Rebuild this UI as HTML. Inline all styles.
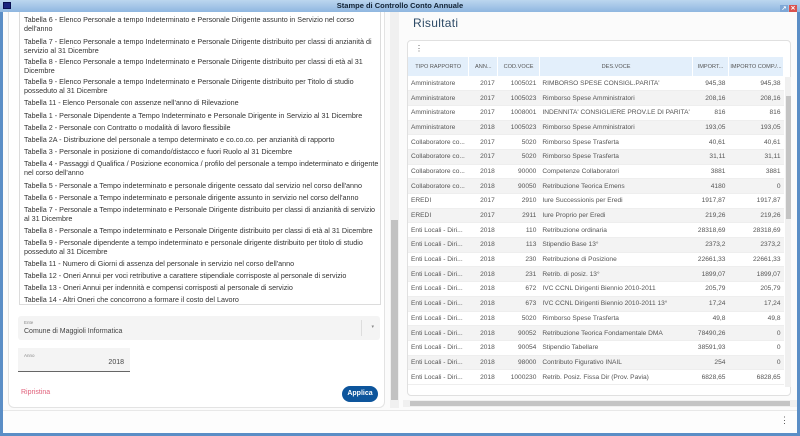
<!DOCTYPE html>
<html><head><meta charset="utf-8"><style>
*{box-sizing:border-box;margin:0;padding:0}
body{width:800px;height:436px;overflow:hidden;font-family:"Liberation Sans",sans-serif;background:#5b8ec6;position:relative}
.tb{position:absolute;left:0;top:0;width:800px;height:12px;background:linear-gradient(#bcd6ef,#8fb6e0);font-size:7.5px;font-weight:bold;color:#123;text-align:center;line-height:12px}
.ico{position:absolute;left:3px;top:2px;width:8px;height:7px;background:#1a237e;border:1px solid #0a0f50}
.btns{position:absolute;right:3px;top:2px}
.btns span{display:inline-block;width:8px;height:8px;margin-left:1px;font-size:6px;line-height:8px;color:#fff;text-align:center}
.main{position:absolute;left:3px;top:12px;width:794px;height:421px;background:#fbfbfb}
.lc{position:absolute;left:5px;top:0;width:377px;height:396px;background:#fff;border:1px solid #e3e3e3;border-top:none;border-radius:0 0 6px 6px}
.list{position:absolute;left:10px;top:0;width:362px;height:293px;border:1px solid #dcdcdc;border-top:none;background:#fff}
.it{position:absolute;left:4px;font-size:7.2px;color:#333;line-height:9px;width:356px}
.lsb{position:absolute;left:387px;top:0;width:9px;height:396px;background:#f0f0f0}
.lth{position:absolute;left:388px;top:208px;width:7px;height:180px;background:#c2c2c2}
.sel{position:absolute;left:15px;top:304px;width:362px;height:24px;background:#f4f4f4;border-radius:3px}
.anno{position:absolute;left:15px;top:336px;width:112px;height:24px;background:#f4f4f4;border-bottom:1px solid #666}
.card{position:absolute;left:404px;top:28px;width:384px;height:356px;background:#fff;border:1px solid #e0e0e0;border-radius:4px}
table{position:absolute;left:0;top:16px;border-collapse:collapse;width:376px;font-size:6.6px;color:#555}
th{background:#e3effb;font-weight:normal;font-size:5.6px;height:19px;text-align:center;color:#555;border-right:1px solid #fff}
td{height:14.7px;padding:0 3px;white-space:nowrap;border-bottom:1px solid #eee}
tr:nth-child(odd) td{background:#f3f3f3}
.r{text-align:right}
.bot{position:absolute;left:0;top:398px;width:794px;height:23px;background:#fdfdfd;border-top:1px solid #e8e8e8}
</style></head><body>
<div class="tb"><div class="ico"></div>Stampe di Controllo Conto Annuale<div class="btns"><span style="background:#7ea7d6">↗</span><span style="background:#d9534f">✕</span></div></div>
<div class="main">
<div class="lc">
<div class="list">
<div class="it" style="top:3px">Tabella 6 - Elenco Personale a tempo Indeterminato e Personale Dirigente assunto in Servizio nel corso dell'anno</div>
<div class="it" style="top:25px">Tabella 7 - Elenco Personale a tempo Indeterminato e Personale Dirigente distribuito per classi di anzianità di servizio al 31 Dicembre</div>
<div class="it" style="top:45px">Tabella 8 - Elenco Personale a tempo Indeterminato e Personale Dirigente distribuito per classi di età al 31 Dicembre</div>
<div class="it" style="top:65px">Tabella 9 - Elenco Personale a tempo Indeterminato e Personale Dirigente distribuito per Titolo di studio posseduto al 31 Dicembre</div>
<div class="it" style="top:86px">Tabella 11 - Elenco Personale con assenze nell'anno di Rilevazione</div>
<div class="it" style="top:99px">Tabella 1 - Personale Dipendente a Tempo Indeterminato e Personale Dirigente in Servizio al 31 Dicembre</div>
<div class="it" style="top:111px">Tabella 2 - Personale con Contratto o modalità di lavoro flessibile</div>
<div class="it" style="top:123px">Tabella 2A - Distribuzione del personale a tempo determinato e co.co.co. per anzianità di rapporto</div>
<div class="it" style="top:135px">Tabella 3 - Personale in posizione di comando/distacco e fuori Ruolo al 31 Dicembre</div>
<div class="it" style="top:147px">Tabella 4 - Passaggi d Qualifica / Posizione economica / profilo del personale a tempo indeterminato e dirigente nel corso dell'anno</div>
<div class="it" style="top:169px">Tabella 5 - Personale a Tempo indeterminato e personale dirigente cessato dal servizio nel corso dell'anno</div>
<div class="it" style="top:181px">Tabella 6 - Personale a Tempo indeterminato e personale dirigente assunto in servizio nel corso dell'anno</div>
<div class="it" style="top:193px">Tabella 7 - Personale a Tempo indeterminato e Personale Dirigente distribuito per classi di anzianità di servizio al 31 Dicembre</div>
<div class="it" style="top:214px">Tabella 8 - Personale a Tempo indeterminato e Personale Dirigente distribuito per classi di età al 31 Dicembre</div>
<div class="it" style="top:226px">Tabella 9 - Personale dipendente a tempo indeterminato e personale dirigente distribuito per titolo di studio posseduto al 31 Dicembre</div>
<div class="it" style="top:247px">Tabella 11 - Numero di Giorni di assenza del personale in servizio nel corso dell'anno</div>
<div class="it" style="top:259px">Tabella 12 - Oneri Annui per voci retributive a carattere stipendiale corrisposte al personale di servizio</div>
<div class="it" style="top:271px">Tabella 13 - Oneri Annui per indennità e compensi corrisposti al personale di servizio</div>
<div class="it" style="top:283px">Tabella 14 - Altri Oneri che concorrono a formare il costo del Lavoro</div>
</div>
</div>
<div class="sel"><div style="position:absolute;left:6px;top:4px;font-size:4.5px;color:#888">Ente</div><div style="position:absolute;left:6px;top:12px;font-size:7px;color:#444">Comune di Maggioli Informatica</div><div style="position:absolute;right:6px;top:8px;font-size:5px;color:#888">▾</div><div style="position:absolute;right:18px;top:4px;height:16px;border-left:1px solid #ddd"></div></div>
<div class="anno"><div style="position:absolute;left:6px;top:5px;font-size:4.5px;color:#888">Anno</div><div style="position:absolute;right:6px;top:11px;font-size:7px;color:#444">2018</div></div>
<div style="position:absolute;left:18px;top:377px;font-size:7px;color:#e0607a">Ripristina</div>
<div style="position:absolute;left:339px;top:374px;width:36px;height:16px;border-radius:9px;background:#0d559c;color:#fff;font-size:7px;font-weight:bold;text-align:center;line-height:16px">Applica</div>
<div class="lsb"></div><div class="lth"></div>
<div style="position:absolute;left:410px;top:4px;font-size:12px;color:#2d4a66;letter-spacing:.3px">Risultati</div>
<div class="card">
<div style="position:absolute;left:7px;top:3px;font-size:8px;color:#555">⋮</div>
<table>
<tr><th style="width:61px">TIPO RAPPORTO</th><th style="width:30px">ANN...</th><th style="width:43px">COD.VOCE</th><th style="width:148px">DES.VOCE</th><th style="width:36px">IMPORT...</th><th style="width:58px">IMPORTO COMP./...</th></tr>
<tr><td>Amministratore</td><td class="r">2017</td><td class="r">1005021</td><td>RIMBORSO SPESE CONSIGL.PARITA'</td><td class="r">945,38</td><td class="r">945,38</td></tr>
<tr><td>Amministratore</td><td class="r">2017</td><td class="r">1005023</td><td>Rimborso Spese Amministratori</td><td class="r">208,16</td><td class="r">208,16</td></tr>
<tr><td>Amministratore</td><td class="r">2017</td><td class="r">1008001</td><td>INDENNITA' CONSIGLIERE PROV.LE DI PARITA'</td><td class="r">816</td><td class="r">816</td></tr>
<tr><td>Amministratore</td><td class="r">2018</td><td class="r">1005023</td><td>Rimborso Spese Amministratori</td><td class="r">193,05</td><td class="r">193,05</td></tr>
<tr><td>Collaboratore co...</td><td class="r">2017</td><td class="r">5020</td><td>Rimborso Spese Trasferta</td><td class="r">40,61</td><td class="r">40,61</td></tr>
<tr><td>Collaboratore co...</td><td class="r">2017</td><td class="r">5020</td><td>Rimborso Spese Trasferta</td><td class="r">31,11</td><td class="r">31,11</td></tr>
<tr><td>Collaboratore co...</td><td class="r">2018</td><td class="r">90000</td><td>Competenze Collaboratori</td><td class="r">3881</td><td class="r">3881</td></tr>
<tr><td>Collaboratore co...</td><td class="r">2018</td><td class="r">90050</td><td>Retribuzione Teorica Emens</td><td class="r">4180</td><td class="r">0</td></tr>
<tr><td>EREDI</td><td class="r">2017</td><td class="r">2910</td><td>Iure Successionis per Eredi</td><td class="r">1917,87</td><td class="r">1917,87</td></tr>
<tr><td>EREDI</td><td class="r">2017</td><td class="r">2911</td><td>Iure Proprio per Eredi</td><td class="r">219,26</td><td class="r">219,26</td></tr>
<tr><td>Enti Locali - Diri...</td><td class="r">2018</td><td class="r">110</td><td>Retribuzione ordinaria</td><td class="r">28318,69</td><td class="r">28318,69</td></tr>
<tr><td>Enti Locali - Diri...</td><td class="r">2018</td><td class="r">113</td><td>Stipendio Base 13°</td><td class="r">2373,2</td><td class="r">2373,2</td></tr>
<tr><td>Enti Locali - Diri...</td><td class="r">2018</td><td class="r">230</td><td>Retribuzione di Posizione</td><td class="r">22661,33</td><td class="r">22661,33</td></tr>
<tr><td>Enti Locali - Diri...</td><td class="r">2018</td><td class="r">231</td><td>Retrib. di posiz. 13°</td><td class="r">1899,07</td><td class="r">1899,07</td></tr>
<tr><td>Enti Locali - Diri...</td><td class="r">2018</td><td class="r">672</td><td>IVC CCNL Dirigenti Biennio 2010-2011</td><td class="r">205,79</td><td class="r">205,79</td></tr>
<tr><td>Enti Locali - Diri...</td><td class="r">2018</td><td class="r">673</td><td>IVC CCNL Dirigenti Biennio 2010-2011 13°</td><td class="r">17,24</td><td class="r">17,24</td></tr>
<tr><td>Enti Locali - Diri...</td><td class="r">2018</td><td class="r">5020</td><td>Rimborso Spese Trasferta</td><td class="r">49,8</td><td class="r">49,8</td></tr>
<tr><td>Enti Locali - Diri...</td><td class="r">2018</td><td class="r">90052</td><td>Retribuzione Teorica Fondamentale DMA</td><td class="r">78490,26</td><td class="r">0</td></tr>
<tr><td>Enti Locali - Diri...</td><td class="r">2018</td><td class="r">90054</td><td>Stipendio Tabellare</td><td class="r">38591,93</td><td class="r">0</td></tr>
<tr><td>Enti Locali - Diri...</td><td class="r">2018</td><td class="r">98000</td><td>Contributo Figurativo INAIL</td><td class="r">254</td><td class="r">0</td></tr>
<tr><td>Enti Locali - Diri...</td><td class="r">2018</td><td class="r">1000230</td><td>Retrib. Posiz. Fissa Dir (Prov. Pavia)</td><td class="r">6828,65</td><td class="r">6828,65</td></tr>
</table>
<div style="position:absolute;left:377px;top:36px;width:6px;height:310px;background:#f0f0f0"></div>
<div style="position:absolute;left:378px;top:55px;width:5px;height:123px;background:#c4c4c4"></div>
</div>
<div style="position:absolute;left:400px;top:388px;width:394px;height:7px;background:#f0f0f0"></div>
<div style="position:absolute;left:407px;top:389px;width:380px;height:5px;background:#c4c4c4"></div>
<div class="bot"><div style="position:absolute;right:8px;top:4px;font-size:9px;color:#555">⋮</div></div>
</div>
</body></html>
